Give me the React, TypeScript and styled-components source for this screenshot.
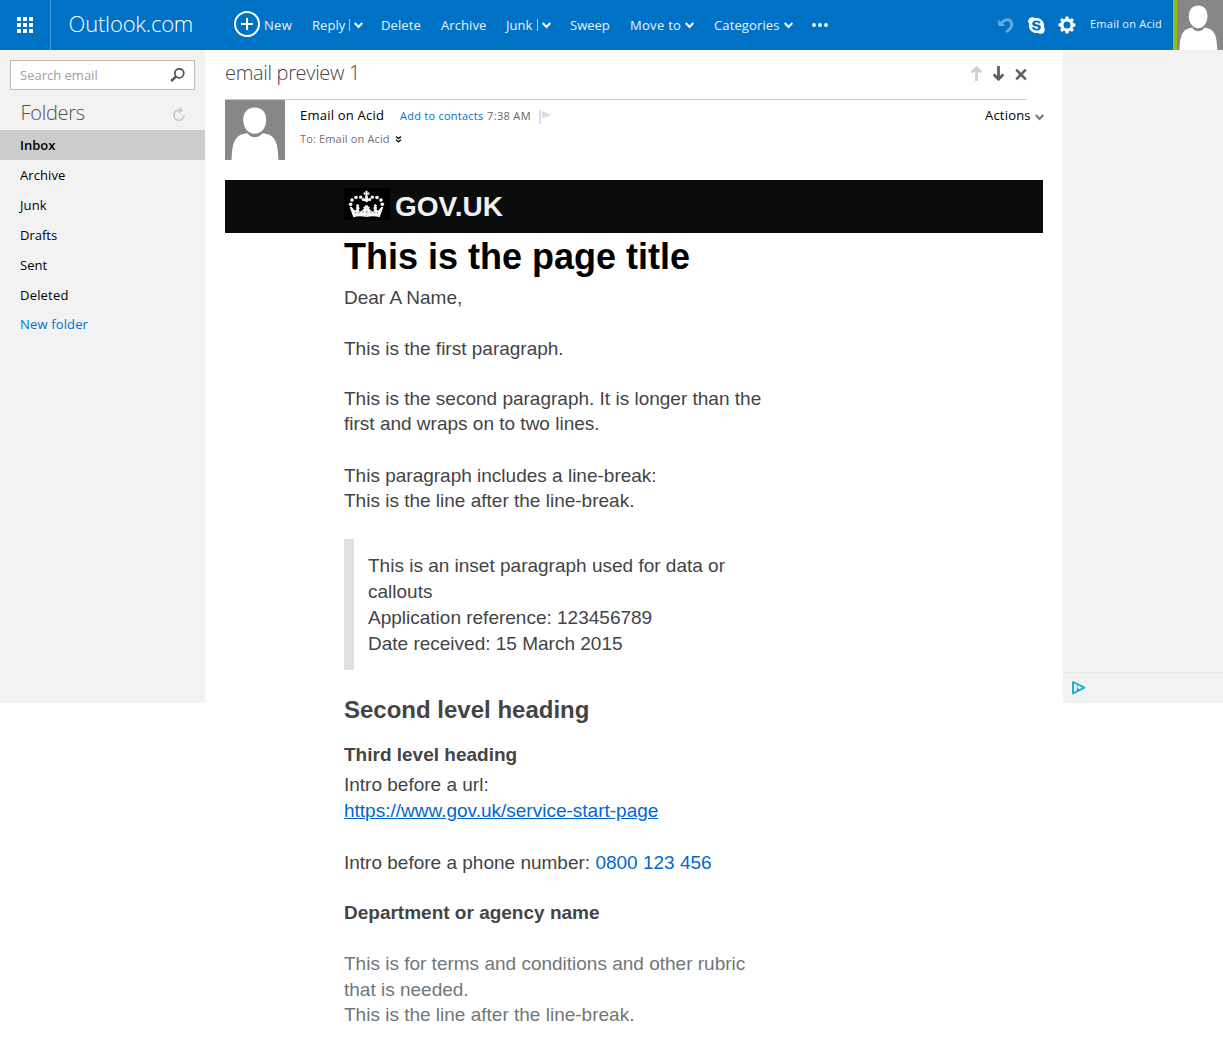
import React from "react";
import styled, { createGlobalStyle } from "styled-components";
import { FaSkype } from "react-icons/fa";

const ui = `"Segoe UI", "Open Sans", "Noto Sans", sans-serif`;
const mail = `Helvetica, "Liberation Sans", Arial, sans-serif`;

const GlobalStyle = createGlobalStyle`
  *, *::before, *::after { box-sizing: border-box; }
  body { margin: 0; background: #fff; font-family: ${ui}; }
  svg { display: block; flex: none; }
  p, h1, h2, h3 { margin: 0; }
`;

const Page = styled.div`
  width: 1223px;
  height: 1053px;
  overflow: hidden;
`;

const Label = styled.span<{ $track?: number }>`
  white-space: nowrap;
  letter-spacing: ${(p) => p.$track ?? 0}px;
`;

/* ---------- top bar ---------- */

const TopBar = styled.header`
  display: flex;
  height: 50px;
  background: #0072c6;
  color: #e8f3fb;
`;

const AppLauncher = styled.button`
  display: flex;
  align-items: center;
  width: 51px;
  height: 50px;
  padding: 0 0 0 17px;
  border: 0;
  border-right: 1px solid #4d9cd7;
  background: none;
`;

const Brand = styled.div`
  width: 183px;
  padding-left: 17.5px;
  font-size: 22px;
  font-weight: 300;
  line-height: 47px;
  color: #fff;
`;

const Commands = styled.nav`
  display: flex;
  flex: 1;
`;

const Command = styled.button<{ $width: number; $gap?: number }>`
  display: flex;
  flex: none;
  align-items: center;
  gap: ${(p) => p.$gap ?? 4}px;
  width: ${(p) => p.$width}px;
  height: 50px;
  padding: 0;
  border: 0;
  background: none;
  font: 400 13px/50px ${ui};
  color: inherit;
`;

const PlusSlot = styled.span`
  margin-bottom: 2px;
`;

const SplitMark = styled.i`
  width: 1px;
  height: 12px;
  background: #9fcbea;
`;

const Account = styled.div`
  display: flex;
  align-items: center;
  height: 50px;
`;

const TopIcon = styled.span<{ $width: number }>`
  display: flex;
  flex: none;
  width: ${(p) => p.$width}px;
`;

const AccountName = styled.span`
  width: 83px;
  height: 48px;
  font-size: 11px;
  line-height: 47px;
  align-self: flex-start;
`;

const Tile = styled.div`
  display: flex;
  width: 50px;
  height: 50px;
  border-left: 4px solid #8cbf26;
`;

/* ---------- columns ---------- */

const Columns = styled.div`
  display: grid;
  grid-template-columns: 205px 858px 160px;
  align-items: start;
`;

const Sidebar = styled.aside`
  height: 653px;
  padding-top: 10px;
  background: #f2f2f2;
`;

const Search = styled.div`
  display: flex;
  align-items: center;
  justify-content: space-between;
  width: 185px;
  height: 30px;
  margin-left: 10px;
  padding: 0 9px 0 9px;
  border: 1px solid #bababa;
  background: #fff;
  font-size: 13px;
  line-height: 28px;
  color: #a0a0a0;
`;

const FolderHead = styled.div`
  display: flex;
  justify-content: space-between;
  height: 40px;
  padding: 0 19px 0 20.5px;
  font-size: 20px;
  font-weight: 300;
  line-height: 45px;
  color: #505050;

  svg {
    margin-top: 17px;
  }
`;

const Folder = styled.div<{ $active?: boolean; $link?: boolean }>`
  height: 30px;
  padding-left: 20px;
  background: ${(p) => (p.$active ? "#cccccc" : "transparent")};
  font-size: 13px;
  font-weight: ${(p) => (p.$active ? 600 : 400)};
  line-height: ${(p) => (p.$link ? 28 : 30)}px;
  color: ${(p) => (p.$link ? "#0072c6" : "#000")};
`;

const AdColumn = styled.aside`
  display: flex;
  flex-direction: column;
  justify-content: flex-end;
  height: 653px;
  background: #f2f2f2;
`;

const AdFoot = styled.div`
  height: 31px;
  padding: 8px 0 0 9px;
  border-top: 1px solid #e9e9e9;
`;

/* ---------- reading pane ---------- */

const Reader = styled.main`
  padding: 0 20px;
`;

const SubjectBar = styled.div`
  display: flex;
  justify-content: space-between;
  width: 801px;
  height: 50px;
  border-bottom: 1px solid #c8c8c8;
`;

const Subject = styled.h1`
  font-size: 20px;
  font-weight: 300;
  line-height: 45px;
  color: #444;
`;

const SubjectTools = styled.div`
  display: flex;
  gap: 11px;
  margin-right: -1px;
  padding-top: 16px;
`;

const Sender = styled.div`
  display: flex;
  height: 80px;
`;

const SenderInfo = styled.div`
  flex: 1;
  padding-left: 15px;
`;

const SenderRow = styled.div`
  display: flex;
  align-items: baseline;
  height: 27px;
  line-height: 30px;
  font-size: 11px;
  color: #666;

  svg {
    align-self: flex-start;
    margin-top: 10px;
  }
`;

const SenderName = styled.span`
  width: 100px;
  font-size: 13px;
  color: #000;
`;

const AddContact = styled.a`
  width: 87px;
  color: #0072c6;
`;

const Sent = styled.span`
  width: 52px;
`;

const Recipient = styled.div`
  display: flex;
  height: 24px;
  font-size: 11px;
  line-height: 24px;
  color: #707070;

  svg {
    margin: 9px 0 0 5px;
  }
`;

const Actions = styled.button`
  display: flex;
  justify-content: space-between;
  width: 59px;
  height: 30px;
  margin-right: -1px;
  padding: 0;
  border: 0;
  background: none;
  font: 400 13px/30px ${ui};
  color: #000;

  svg {
    margin-top: 14px;
  }
`;

/* ---------- message ---------- */

const Message = styled.article`
  font-family: ${mail};
  color: #434446;
`;

const Banner = styled.div`
  display: flex;
  width: 818px;
  height: 53px;
  padding: 8px 0 0 119px;
  background: #0b0c0c;
`;

const BannerName = styled.span`
  margin-left: 5px;
  font-size: 28px;
  font-weight: 700;
  line-height: 37px;
  color: #f0f1f1;
`;

const Content = styled.div`
  width: 440px;
  margin-left: 119px;
  padding-top: 2px;
`;

const Title = styled.h1`
  font-size: 36px;
  line-height: 44px;
  color: #000;
  white-space: nowrap;
`;

const Heading = styled.h2<{ $top: number }>`
  margin-top: ${(p) => p.$top}px;
  font-size: 24px;
  line-height: 30px;
`;

const SubHeading = styled.h3<{ $top: number }>`
  margin-top: ${(p) => p.$top}px;
  font-size: 19px;
  line-height: 25px;
`;

const Para = styled.p<{ $top: number; $line?: number; $muted?: boolean }>`
  margin-top: ${(p) => p.$top}px;
  font-size: 19px;
  line-height: ${(p) => p.$line ?? 25}px;
  color: ${(p) => (p.$muted ? "#6f777b" : "inherit")};
`;

const Inset = styled.div`
  height: 131px;
  margin-top: 26px;
  padding: 14px 40px 0 14px;
  border-left: 10px solid #dee0e2;
`;

const Link = styled.a<{ $plain?: boolean }>`
  color: #0067cf;
  text-decoration: ${(p) => (p.$plain ? "none" : "underline")};
`;

/* ---------- drawings ---------- */

const Chevron = ({ color = "#fff" }: { color?: string }) => (
  <svg width="9" height="7" viewBox="0 0 9 7">
    <path d="M0.7 1 L4.5 4.9 L8.3 1" fill="none" stroke={color} strokeWidth="2.1" />
  </svg>
);

const Person = ({ width, height, box }: { width: number; height: number; box: string }) => (
  <svg width={width} height={height} viewBox={box} preserveAspectRatio="none">
    <rect x="-5" y="-5" width="80" height="80" fill="#878787" />
    <path
      d="M6.5 61 C7 50 7.5 43 11.5 38 C14 35 18 33.5 22.5 33.3 C26 38.7 33.5 38.7 37.5 33.3 C42 33.5 46 35 48.5 38 C52.5 43 53 50 53.5 61 Z"
      fill="#fff"
    />
    <path
      d="M29.7 7.6 C37 7.6 41.2 12.6 41.2 20 C41.2 28 36 33.8 29.7 33.8 C23.4 33.8 18.2 28 18.2 20 C18.2 12.6 22.4 7.6 29.7 7.6 Z"
      fill="#fff"
    />
  </svg>
);

const Waffle = () => (
  <svg width="16" height="16" viewBox="0 0 16 16" fill="#fff">
    {[0, 6, 12].flatMap((y) =>
      [0, 6, 12].map((x) => <rect key={`${x}-${y}`} x={x} y={y} width="4" height="4" />)
    )}
  </svg>
);

const PlusCircle = () => (
  <svg width="26" height="26" viewBox="0 0 26 26" fill="none" stroke="#fff" strokeWidth="2">
    <circle cx="13" cy="13" r="12" />
    <path d="M7 13 H19 M13 7 V19" />
  </svg>
);

const Undo = () => (
  <svg width="16" height="16" viewBox="0 0 16 16">
    <path
      d="M0.2 2.4 L2.6 4.8 C7 -0.8 15.2 0.4 15.2 7.2 C15.2 11 12.5 13.6 8.8 15.9 L7.2 14.2 C10.4 12 12.3 9.9 12.2 7.4 C12 3.6 7.4 3.2 5 6.8 L7.2 9 H0.2 Z"
      fill="#62a9dd"
    />
  </svg>
);

const Gear = () => (
  <svg width="18" height="18" viewBox="-9 -9 18 18">
    <circle r="5" fill="none" stroke="#fff" strokeWidth="3" />
    {[0, 45, 90, 135, 180, 225, 270, 315].map((a) => (
      <path key={a} d="M-1.9 -5.6 L-1.4 -8.4 H1.4 L1.9 -5.6 Z" fill="#fff" transform={`rotate(${a})`} />
    ))}
  </svg>
);

const Magnifier = () => (
  <svg width="15" height="14" viewBox="0 0 15 14" fill="none" stroke="#555">
    <circle cx="9.3" cy="5.3" r="4.5" strokeWidth="1.8" />
    <path d="M6.2 8.3 L1.2 13" strokeWidth="2.5" />
  </svg>
);

const Refresh = () => (
  <svg width="14" height="15" viewBox="0 0 14 15">
    <path d="M7.6 3.2 H6.4 A5 5 0 1 0 11.9 8.2" fill="none" stroke="#cacaca" strokeWidth="2" />
    <path d="M7 0 L11.4 3.2 L7 6.4 Z" fill="#cacaca" />
  </svg>
);

const Arrow = ({ color, down }: { color: string; down?: boolean }) => (
  <svg width="11" height="15" viewBox="0.5 0 11 15">
    <path
      d="M6 1.5 V15 M1.2 6.6 L6 1.8 L10.8 6.6"
      fill="none"
      stroke={color}
      strokeWidth="2.8"
      transform={down ? "rotate(180 6 7.5)" : undefined}
    />
  </svg>
);

const Cross = () => (
  <svg width="12" height="17" viewBox="0 0 12 17">
    <path d="M1.2 3.7 L10.8 13.3 M10.8 3.7 L1.2 13.3" stroke="#5f5f5f" strokeWidth="2.6" />
  </svg>
);

const Flag = () => (
  <svg width="13" height="14" viewBox="0 0 13 14" fill="#dcdcdc">
    <rect width="2" height="14" />
    <path d="M3 1 L12.5 5 L3 8.6 Z" />
  </svg>
);

const DoubleChevron = () => (
  <svg width="7" height="7" viewBox="0 0 7 7" fill="none" stroke="#111" strokeWidth="1.3">
    <path d="M1 0.5 L3.5 2.6 L6 0.5 M1 3.7 L3.5 5.8 L6 3.7" />
  </svg>
);

const Dots = () => (
  <svg width="16" height="4" viewBox="0 0 16 4" fill="#fff">
    <circle cx="2" cy="2" r="1.9" />
    <circle cx="8" cy="2" r="1.9" />
    <circle cx="14" cy="2" r="1.9" />
  </svg>
);

const AdChoices = () => (
  <svg width="14" height="14" viewBox="0 0 14 14">
    <path d="M1 1 L12.4 6.6 L1 12.4 Z" fill="#fff" stroke="#16b0d0" strokeWidth="1.9" strokeLinejoin="round" />
    <path d="M4.2 5 H6 M4.5 8.4 H7.6 M5.6 6.2 V8.6" fill="none" stroke="#16b0d0" strokeWidth="1.2" />
  </svg>
);

const CrownHalf = () => (
  <>
    <circle cx="20" cy="49" r="5.4" />
    <circle cx="24" cy="36" r="5.4" />
    <circle cx="36" cy="28.5" r="5.4" />
    <circle cx="50" cy="27.5" r="5" />
    <circle cx="58" cy="34.5" r="4.8" />
    <path d="M17 57 L23 57 L33 68 L38 64 L35 60 L38 57 L36 52 L41 48 L46 52 L44 57 L48 60 L44 65 L48 71 L56 66 L60 61 L57 57 L62 56 L64 52 L68 52 V87 C53 84 40 84 28 88 Z" />
  </>
);

const Crown = () => (
  <svg width="46" height="32" viewBox="0 0 138 96">
    <rect width="138" height="96" fill="#000" />
    <g fill="#f8f8f8">
      <CrownHalf />
      <g transform="translate(135 0) scale(-1 1)">
        <CrownHalf />
      </g>
      <path d="M64 8 H71 L70 14 L76 13 V21 L70 19 L72 29 L75 38 L67.5 43 L60 38 L63 29 L65 19 L59 21 V13 L65 14 Z" />
    </g>
    <path d="M33 74.5 C53 71 82 71 102 74.5" fill="none" stroke="#000" strokeWidth="1.6" strokeDasharray="5 6" />
  </svg>
);

const folders: { name: string; track: number }[] = [
  { name: "Archive", track: 0.08 },
  { name: "Junk", track: 0.1 },
  { name: "Drafts", track: 0 },
  { name: "Sent", track: 0.05 },
  { name: "Deleted", track: 0.2 },
];

export default function App() {
  return (
    <Page>
      <GlobalStyle />
      <TopBar>
        <AppLauncher aria-label="Apps"><Waffle /></AppLauncher>
        <Brand><Label $track={-0.18}>Outlook.com</Label></Brand>
        <Commands>
          <Command $width={78}>
            <PlusSlot><PlusCircle /></PlusSlot>
            <Label $track={0.3}>New</Label>
          </Command>
          <Command $width={69}>
            <Label $track={0.05}>Reply</Label>
            <SplitMark />
            <Chevron />
          </Command>
          <Command $width={60}><Label $track={0.1}>Delete</Label></Command>
          <Command $width={65}><Label $track={0.08}>Archive</Label></Command>
          <Command $width={64} $gap={4.5}>
            <Label $track={0}>Junk</Label>
            <SplitMark />
            <Chevron />
          </Command>
          <Command $width={60}><Label $track={0}>Sweep</Label></Command>
          <Command $width={84}><Label $track={0.3}>Move to</Label><Chevron /></Command>
          <Command $width={98}><Label $track={0.12}>Categories</Label><Chevron /></Command>
          <Command $width={30}><Dots /></Command>
        </Commands>
        <Account>
          <TopIcon $width={29}><Undo /></TopIcon>
          <TopIcon $width={31}><FaSkype size={19} color="#fff" /></TopIcon>
          <TopIcon $width={32}><Gear /></TopIcon>
          <AccountName><Label $track={0.25}>Email on Acid</Label></AccountName>
          <Tile><Person width={46} height={50} box="3.6 1.3 56.8 57.5" /></Tile>
        </Account>
      </TopBar>

      <Columns>
        <Sidebar>
          <Search><Label $track={0}>Search email</Label><Magnifier /></Search>
          <FolderHead><Label $track={-0.3}>Folders</Label><Refresh /></FolderHead>
          <Folder $active><Label $track={0}>Inbox</Label></Folder>
          {folders.map((f) => (
            <Folder key={f.name}><Label $track={f.track}>{f.name}</Label></Folder>
          ))}
          <Folder $link><Label $track={0.15}>New folder</Label></Folder>
        </Sidebar>

        <Reader>
          <SubjectBar>
            <Subject><Label $track={-0.32}>email preview 1</Label></Subject>
            <SubjectTools>
              <Arrow color="#cfcfcf" />
              <Arrow color="#5f5f5f" down />
              <Cross />
            </SubjectTools>
          </SubjectBar>
          <Sender>
            <Person width={60} height={60} box="0 0 60 60" />
            <SenderInfo>
              <SenderRow>
                <SenderName><Label $track={0.22}>Email on Acid</Label></SenderName>
                <AddContact><Label $track={0.25}>Add to contacts</Label></AddContact>
                <Sent><Label $track={0.35}>7:38 AM</Label></Sent>
                <Flag />
              </SenderRow>
              <Recipient><Label $track={0.15}>To: Email on Acid</Label><DoubleChevron /></Recipient>
            </SenderInfo>
            <Actions><Label $track={0.2}>Actions</Label><Chevron color="#777" /></Actions>
          </Sender>

          <Message>
            <Banner>
              <Crown />
              <BannerName>GOV.UK</BannerName>
            </Banner>
            <Content>
              <Title>This is the page title</Title>
              <Para $top={6}>Dear A Name,</Para>
              <Para $top={26}>This is the first paragraph.</Para>
              <Para $top={25}>This is the second paragraph. It is longer than the<br />first and wraps on to two lines.</Para>
              <Para $top={27}>This paragraph includes a line-break:<br />This is the line after the line-break.</Para>
              <Inset>
                <Para $top={0} $line={26}>
                  This is an inset paragraph used for data or callouts<br />
                  Application reference: 123456789<br />
                  Date received: 15 March 2015
                </Para>
              </Inset>
              <Heading $top={25}>Second level heading</Heading>
              <SubHeading $top={17}>Third level heading</SubHeading>
              <Para $top={5} $line={26}>
                Intro before a url:<br />
                <Link>https://www.gov.uk/service-start-page</Link>
              </Para>
              <Para $top={26} $line={26}>
                Intro before a phone number: <Link $plain>0800 123 456</Link>
              </Para>
              <SubHeading $top={24}>Department or agency name</SubHeading>
              <Para $top={26} $line={25.5} $muted>
                This is for terms and conditions and other rubric<br />
                that is needed.<br />
                This is the line after the line-break.
              </Para>
            </Content>
          </Message>
        </Reader>

        <AdColumn><AdFoot><AdChoices /></AdFoot></AdColumn>
      </Columns>
    </Page>
  );
}
